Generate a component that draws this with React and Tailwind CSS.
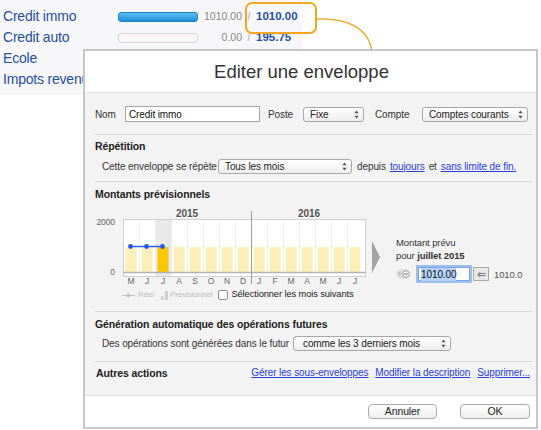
import React from 'react';

const months = ['M', 'J', 'J', 'A', 'S', 'O', 'N', 'D', 'J', 'F', 'M', 'A', 'M', 'J', 'J'];

function UpDown() {
  return (
    <svg width="5" height="9" viewBox="0 0 5 9" className="shrink-0">
      <path d="M2.5 0.5 L4.6 3.2 H0.4 Z M2.5 8.5 L4.6 5.8 H0.4 Z" fill="#555" />
    </svg>
  );
}

function Select({ label, className }) {
  return (
    <div className={`flex items-center justify-between h-[15px] rounded-[3px] border border-[#a9a9a9] bg-linear-to-b from-white to-[#ededed] pl-[6px] pr-[4px] text-[#222] ${className}`}>
      <span>{label}</span>
      <UpDown />
    </div>
  );
}

function Link({ children, className = '' }) {
  return <span className={`text-[#2740e0] underline underline-offset-[1px] ${className}`}>{children}</span>;
}

function Divider({ className = '' }) {
  return <div className={`h-px bg-[#d9d9d9] ${className}`} />;
}

function Chart() {
  return (
    <svg width="275" height="85" className="block">
      <rect x="28.5" y="15.5" width="242" height="57" fill="#fff" stroke="#cfcfcf" />
      <rect x="60" y="16" width="16" height="56" fill="#e9e9eb" />
      {months.map((m, i) =>
        i > 0 ? <line key={'g' + i} x1={28.5 + 16 * i} x2={28.5 + 16 * i} y1="16" y2="68" stroke="#efefef" /> : null
      )}
      {months.map((m, i) => (
        <rect key={'b' + i} x={30.5 + 16 * i} y="43" width="11" height="25" fill={i === 2 ? '#fbc800' : '#fdefb8'} />
      ))}
      <line x1="28" x2="271" y1="68.5" y2="68.5" stroke="#b3b3b3" strokeWidth="1.5" />
      <line x1="156.5" x2="156.5" y1="7" y2="80" stroke="#9c9c9c" />
      <line x1="35.5" x2="67.5" y1="42.5" y2="42.5" stroke="#2f5ff2" strokeWidth="1.5" />
      {[35.5, 51.5, 67.5].map((x) => (
        <circle key={x} cx={x} cy="42.5" r="2.4" fill="#2457ee" />
      ))}
      <g fontFamily="'Liberation Sans', Arial, sans-serif">
        <text x="20" y="21" fontSize="8.5" fill="#666" textAnchor="end">2000</text>
        <text x="20" y="71" fontSize="8.5" fill="#666" textAnchor="end">0</text>
        <text x="92" y="12.5" fontSize="10" fontWeight="bold" fill="#555" textAnchor="middle">2015</text>
        <text x="214" y="12.5" fontSize="10" fontWeight="bold" fill="#555" textAnchor="middle">2016</text>
        {months.map((m, i) => (
          <text key={'m' + i} x={36 + 16 * i} y="80" fontSize="8.5" fill="#666" textAnchor="middle">{m}</text>
        ))}
      </g>
    </svg>
  );
}

export default function App() {
  return (
    <div className="relative w-[541px] h-[430px] overflow-hidden bg-white font-['Liberation_Sans',Arial,sans-serif]">
      {/* background envelope list */}
      <div className="w-[302px] h-[95px] bg-[#f7f7f9] pt-[6px]">
        {[
          { name: 'Credit immo', done: '1010.00', total: '1010.00', full: true },
          { name: 'Credit auto', done: '0.00', total: '195.75' },
          { name: 'Ecole' },
          { name: 'Impots revenus' },
        ].map((r) => (
          <div key={r.name} className="flex items-center h-[21px]">
            <div className="w-[118px] pl-[3px] text-[14px] tracking-[-0.2px] text-[#24509e] whitespace-nowrap">{r.name}</div>
            {r.done && (
              <>
                <div
                  className={`w-[80px] h-[10px] rounded-[3px] border ${
                    r.full ? 'border-[#1b82c8] bg-linear-to-b from-[#5cc0f4] to-[#1f8ed6]' : 'border-[#d6d6d6] bg-[#fcf5f5]'
                  }`}
                />
                <div className="w-[44px] text-right text-[10.5px] text-[#888]">{r.done}</div>
                <div className="w-[14px] text-center text-[10.5px] text-[#aaa]">/</div>
                <div className="text-[11.5px] font-bold text-[#24509e]">{r.total}</div>
              </>
            )}
          </div>
        ))}
      </div>

      {/* highlight + connector */}
      <div className="absolute left-[245px] top-[2px] w-[72px] h-[32px] rounded-[7px] border-2 border-[#f5a623]" />
      <svg className="absolute left-[316px] top-[15px]" width="60" height="40">
        <path d="M1 4 C 30 3, 52 12, 56 36" fill="none" stroke="#f5a623" strokeWidth="1.3" />
      </svg>

      {/* dialog */}
      <div className="absolute left-[83px] top-[49px] w-[455px] h-[380px] border-2 border-[#c7c7c7] bg-white flex flex-col text-[10px] text-[#333] tracking-[-0.1px]">
        <div className="h-[42px] shrink-0 flex items-center justify-center pr-[18px] border-b border-[#e3e3e3] text-[18.5px] text-[#333] tracking-normal">
          Editer une enveloppe
        </div>

        <div className="h-[302px] shrink-0 bg-[#f3f3f3] pl-[10px] pr-[4px] pt-[12px]">
          {/* Nom row */}
          <div className="flex items-center h-[18px]">
            <span className="w-[30px]">Nom</span>
            <div className="w-[135px] h-[16px] border border-[#a5a5a5] bg-white pl-[3px] flex items-center text-[#111]">Credit immo</div>
            <span className="w-[35px] ml-[8px]">Poste</span>
            <Select label="Fixe" className="w-[61px]" />
            <span className="w-[47px] ml-[11px]">Compte</span>
            <Select label="Comptes courants" className="w-[106px]" />
          </div>

          <Divider className="mt-[11px]" />

          <div className="mt-[5px] h-[14px] flex items-center font-bold text-[10.5px] text-[#222]">Répétition</div>
          <div className="mt-[4px] h-[16px] flex items-center pl-[7px]">
            <span className="w-[116px]">Cette enveloppe se répète</span>
            <Select label="Tous les mois" className="w-[134px]" />
            <span className="ml-[5px]">depuis</span>
            <Link className="ml-[4px]">toujours</Link>
            <span className="ml-[4px]">et</span>
            <Link className="ml-[4px]">sans limite de fin.</Link>
          </div>

          <Divider className="mt-[7px]" />

          <div className="mt-[6px] h-[14px] flex items-center font-bold text-[10.5px] text-[#222]">Montants prévisionnels</div>
          <div className="mt-[2px] flex items-start">
            <div className="w-[275px] shrink-0">
              <Chart />
              <div className="h-[12px] flex items-center pl-[27px] text-[8px] text-[#bdbdbd] whitespace-nowrap">
                <svg width="13" height="5" className="mr-[3px]">
                  <line x1="0" x2="13" y1="2.5" y2="2.5" stroke="#c4c4c4" />
                  <circle cx="6.5" cy="2.5" r="2" fill="#c4c4c4" />
                </svg>
                <span>Réel</span>
                <svg width="7" height="9" className="ml-[7px] mr-[2px]">
                  <rect x="0" y="5" width="2.5" height="4" fill="#d0d0d0" />
                  <rect x="4" y="0" width="3" height="9" fill="#d0d0d0" />
                </svg>
                <span>Prévisionnel</span>
                <div className="ml-[6px] w-[10px] h-[10px] shrink-0 rounded-[2px] border border-[#8e8e8e] bg-white" />
                <span className="ml-[3px] text-[9.3px] text-[#222]">Sélectionner les mois suivants</span>
              </div>
            </div>
            <svg width="8" height="32" className="ml-[2px] mt-[37px] shrink-0">
              <path d="M0 0 L8 16 L0 32 Z" fill="#a3a3a3" />
            </svg>
            <div className="ml-[16px] mt-[32px] leading-[13px] text-[9.5px]">
              <div>Montant prévu</div>
              <div>
                pour <span className="font-bold">juillet 2015</span>
              </div>
              <div className="mt-[4px] h-[16px] flex items-center">
                <div className="w-[14px] h-[10px] rounded-full bg-[#e1e1e1] flex items-center justify-between pl-[1px] text-[#a8a8a8] text-[9px]">
                  <span className="leading-none">+</span>
                  <svg width="8" height="8">
                    <circle cx="4" cy="4" r="3.3" fill="#fafafa" stroke="#8c8c8c" strokeWidth="0.8" />
                    <line x1="2" x2="6" y1="4" y2="4" stroke="#777" />
                  </svg>
                </div>
                <div className="ml-[8px] w-[52px] h-[14px] border border-[#7ba4e2] bg-white ring-2 ring-[#9ec0f0] flex items-center pl-[2px] text-[10px] text-[#111]">
                  <span className="bg-[#b5d3fb]">1010.00</span>
                </div>
                <div className="ml-[3px] w-[16px] h-[14px] border border-[#a9a9a9] bg-[#e8e8e8] flex items-center justify-center text-[#666] text-[11px] leading-none">⇐</div>
                <span className="ml-[5px] text-[#555]">1010.0</span>
              </div>
            </div>
          </div>

          <Divider className="mt-[10px]" />

          <div className="mt-[6px] h-[14px] flex items-center font-bold text-[10.5px] text-[#222]">Génération automatique des opérations futures</div>
          <div className="mt-[3px] h-[16px] flex items-center pl-[7px]">
            <span className="w-[191px]">Des opérations sont générées dans le futur</span>
            <Select label="comme les 3 derniers mois" className="w-[158px] pl-[9px]" />
          </div>

          <Divider className="mt-[10px]" />

          <div className="mt-[5px] h-[14px] flex items-center pr-[2px]">
            <span className="pl-[1px] font-bold text-[10.5px] text-[#222]">Autres actions</span>
            <div className="ml-auto flex items-center gap-[7px] -mt-[3px]">
              <Link>Gérer les sous-enveloppes</Link>
              <Link>Modifier la description</Link>
              <Link>Supprimer...</Link>
            </div>
          </div>
        </div>

        <div className="flex-1 flex items-center justify-end gap-[23px] pr-[6px] border-t border-[#e3e3e3] bg-white">
          <div className="w-[69px] h-[15px] rounded-[4px] border border-[#ababab] bg-linear-to-b from-white to-[#efefef] flex items-center justify-center text-[10.5px] text-[#222]">Annuler</div>
          <div className="w-[70px] h-[15px] rounded-[4px] border border-[#ababab] bg-linear-to-b from-white to-[#efefef] flex items-center justify-center text-[10.5px] text-[#222]">OK</div>
        </div>
      </div>
    </div>
  );
}
